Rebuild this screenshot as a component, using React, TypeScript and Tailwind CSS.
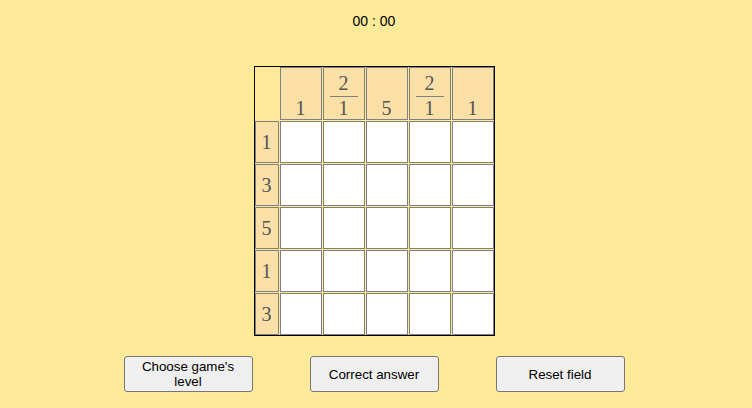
const colClues: number[][] = [[1], [2, 1], [5], [2, 1], [1]];
const rowClues: number[] = [1, 3, 5, 1, 3];

function ColClue({ nums }: { nums: number[] }) {
  return (
    <div className="flex flex-col items-center justify-end border border-[#808080] bg-[#fae0a6]">
      {nums.map((n, i) => (
        <div key={i} className="flex flex-col items-center">
          {i > 0 && <div className="mt-[2px] h-px w-[28px] bg-[#808080]" />}
          <span className="leading-[22px]">{n}</span>
        </div>
      ))}
    </div>
  );
}

export default function App() {
  return (
    <div className="min-h-screen bg-[#feea99] font-['Liberation_Sans',Arial,sans-serif]">
      <div className="flex w-[748px] flex-col items-center">
        <div className="pt-[11px] text-sm leading-5 text-black">00 : 00</div>

        <div className="mt-[35px] grid grid-cols-[24px_repeat(5,42px)] grid-rows-[53px_repeat(5,42px)] gap-px border border-black font-['Liberation_Serif','Times_New_Roman',serif] text-[20px] text-[#555]">
          <div />
          {colClues.map((nums, i) => (
            <ColClue key={i} nums={nums} />
          ))}
          {rowClues.map((n, r) => (
            <div key={r} className="contents">
              <div className="flex items-center justify-center border border-[#808080] bg-[#fae0a6] leading-[22px]">
                {n}
              </div>
              {colClues.map((_, c) => (
                <div key={c} className="border border-[#808080] bg-white" />
              ))}
            </div>
          ))}
        </div>

        <div className="mt-[20px] flex gap-[57px]">
          {["Choose game's level", "Correct answer", "Reset field"].map((label) => (
            <button
              key={label}
              className="h-[36px] w-[129px] rounded-[3px] border border-[#767676] bg-[#efefef] px-[6px] text-[13.33px] leading-[15px] text-black"
            >
              {label}
            </button>
          ))}
        </div>
      </div>
    </div>
  );
}
